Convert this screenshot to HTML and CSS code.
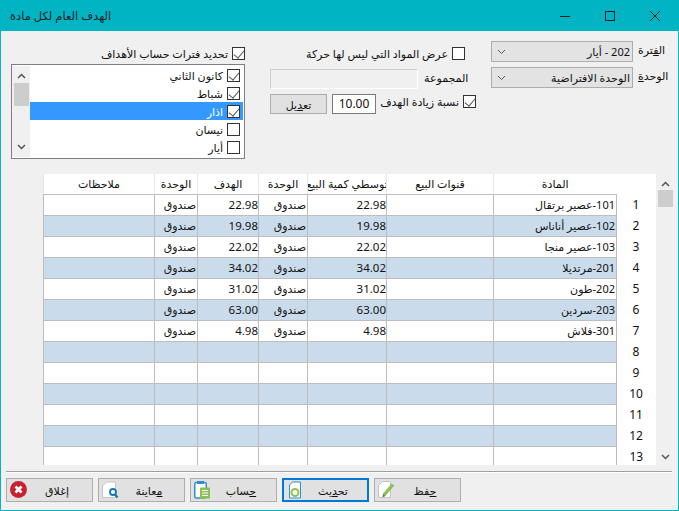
FILE: index.html
```html
<!DOCTYPE html>
<html lang="ar">
<head>
  <meta charset="UTF-8" />
  <title>الهدف العام لكل مادة</title>
  <link rel="stylesheet" href="styles.css">
</head>
<body>
  <div class="window">
    <header class="titlebar">
      <div class="title">الهدف العام لكل مادة</div>
      <div class="win-btns">
        <svg width="12" height="12" viewBox="0 0 12 12"><path d="M1 6.500H11" stroke="#1a1a1a" fill="none"/></svg>
        <svg width="12" height="12" viewBox="0 0 12 12"><rect x="1.500" y="1.500" width="9" height="9" stroke="#1a1a1a" fill="none"/></svg>
        <svg width="12" height="12" viewBox="0 0 12 12"><path d="M1 1L11 11M11 1L1 11" stroke="#1a1a1a" fill="none"/></svg>
      </div>
    </header>

    <section class="filters">
      <div class="months">
        <label class="check check-head">تحديد فترات حساب الأهداف<span class="box on"></span></label>
        <div class="listbox">
          <div class="lb-scroll">
            <svg width="9" height="6" viewBox="0 0 9 6"><path d="M1 5L4.500 1.500L8 5" stroke="#555" stroke-width="1.500" fill="none"/></svg>
            <div class="lb-thumb"></div>
            <svg width="9" height="6" viewBox="0 0 9 6"><path d="M1 1L4.500 4.500L8 1" stroke="#555" stroke-width="1.500" fill="none"/></svg>
          </div>
          <ul class="lb-items">
            <li>كانون الثاني<span class="box on"></span></li>
            <li>شباط<span class="box on"></span></li>
            <li class="selected">اذار<span class="box on"></span></li>
            <li>نيسان<span class="box"></span></li>
            <li>أيار<span class="box"></span></li>
          </ul>
        </div>
      </div>

      <div class="options">
        <label class="check check-moves">عرض المواد التي ليس لها حركة<span class="box"></span></label>
        <div class="row-group">
          <div class="field-flat"></div>
          <span class="lbl">المجموعة</span>
        </div>
        <div class="row-raise">
          <button class="btn-small">تع<u>د</u>يل</button>
          <div class="num-input">10.00</div>
          <label class="check">نسبة زيادة الهدف<span class="box on"></span></label>
        </div>
      </div>

      <div class="combos">
        <div class="combo-row">
          <div class="combo"><svg width="9" height="6" viewBox="0 0 9 6"><path d="M1 1L4.500 4.500L8 1" stroke="#555" fill="none"/></svg><span>202 - أيار</span></div>
          <span class="lbl">ال<u>ف</u>ترة</span>
        </div>
        <div class="combo-row">
          <div class="combo"><svg width="9" height="6" viewBox="0 0 9 6"><path d="M1 1L4.500 4.500L8 1" stroke="#555" fill="none"/></svg><span>الوحدة الافتراضية</span></div>
          <span class="lbl">الوحد<u>ة</u></span>
        </div>
      </div>
    </section>

    <section class="grid-wrap">
      <table class="grid">
        <colgroup>
          <col class="c-notes"><col class="c-unit"><col class="c-goal"><col class="c-unit2"><col class="c-avg"><col class="c-chan"><col class="c-item"><col class="c-num">
        </colgroup>
        <thead>
          <tr>
            <th><span>ملاحظات</span></th><th><span>الوحدة</span></th><th><span>الهدف</span></th><th><span>الوحدة</span></th><th><span class="clipped">متوسطي كمية البيع</span></th><th><span>قنوات البيع</span></th><th><span>المادة</span></th><th class="num"></th>
          </tr>
        </thead>
        <tbody id="rows"></tbody>
      </table>
      <div class="grid-scroll">
        <svg width="9" height="6" viewBox="0 0 9 6"><path d="M1 5L4.500 1.500L8 5" stroke="#555" stroke-width="1.500" fill="none"/></svg>
        <div class="gs-thumb"></div>
        <svg class="gs-down" width="9" height="6" viewBox="0 0 9 6"><path d="M1 1L4.500 4.500L8 1" stroke="#555" stroke-width="1.500" fill="none"/></svg>
      </div>
    </section>

    <hr class="sep">

    <footer class="actions">
      <button class="btn">
        <svg width="18" height="18" viewBox="0 0 18 18"><circle cx="8.500" cy="8.500" r="8.500" fill="#c8202f"/><path d="M5.500 5.500L11.500 11.500M11.500 5.500L5.500 11.500" stroke="#fff" stroke-width="2.800"/></svg>
        <span>إغلاق</span>
      </button>
      <button class="btn">
        <svg width="18" height="18" viewBox="0 0 18 18"><path d="M0.500 5L4.500 1H13.500V16.500H0.500Z" fill="#fff" stroke="#c4c4c4"/><circle cx="11" cy="11" r="3" fill="#fff" stroke="#1577b8" stroke-width="1.800"/><path d="M13 13.500L15.500 16.500" stroke="#1577b8" stroke-width="2.200"/></svg>
        <span><u>م</u>عاينة</span>
      </button>
      <button class="btn">
        <svg width="18" height="18" viewBox="0 0 18 18"><rect x="0.750" y="1.500" width="11.500" height="15.500" rx="1.500" fill="#fff" stroke="#2b8fd0" stroke-width="1.500"/><rect x="3" y="0" width="7" height="3" fill="#2b8fd0"/><rect x="6" y="6.500" width="10" height="11" fill="#8cc152"/><path d="M8 9.500H14M8 12H14M8 14.500H14" stroke="#fff"/></svg>
        <span><u>ح</u>ساب</span>
      </button>
      <button class="btn active">
        <svg width="18" height="18" viewBox="0 0 18 18"><path d="M3.500 4L6.500 1H14.500V17H3.500Z" fill="#fff" stroke="#2b8fd0"/><circle cx="9" cy="11.500" r="3.500" fill="none" stroke="#8cc152" stroke-width="2"/></svg>
        <span>تح<u>د</u>يث</span>
      </button>
      <button class="btn">
        <svg width="18" height="18" viewBox="0 0 18 18"><path d="M0.500 4.500L4.500 0.500H12.500V16.500H0.500Z" fill="#fff" stroke="#c4c4c4"/><path d="M6 14L15 3.500" stroke="#8cc152" stroke-width="3.400"/><path d="M4.500 16.500L5 13L7.500 15Z" fill="#5d7f34"/></svg>
        <span><u>ح</u>فظ</span>
      </button>
    </footer>
  </div>

  <script>
    const items = [
      { name: "101-عصير برتقال", avg: "22.98", goal: "22.98" },
      { name: "102-عصير أناناس", avg: "19.98", goal: "19.98" },
      { name: "103-عصير منجا", avg: "22.02", goal: "22.02" },
      { name: "201-مرتديلا", avg: "34.02", goal: "34.02" },
      { name: "202-طون", avg: "31.02", goal: "31.02" },
      { name: "203-سردين", avg: "63.00", goal: "63.00" },
      { name: "301-فلاش", avg: "4.98", goal: "4.98" }
    ];

    const rows = document.getElementById("rows");
    for (let i = 0; i < 13; i++) {
      const item = items[i];
      const tr = document.createElement("tr");
      tr.innerHTML =
        "<td></td>" +
        "<td>" + (item ? "صندوق" : "") + "</td>" +
        "<td class='n'>" + (item ? item.goal : "") + "</td>" +
        "<td>" + (item ? "صندوق" : "") + "</td>" +
        "<td class='n'>" + (item ? item.avg : "") + "</td>" +
        "<td></td>" +
        "<td>" + (item ? item.name : "") + "</td>" +
        "<td class='num'>" + (i + 1) + "</td>";
      rows.appendChild(tr);
    }
  </script>
</body>
</html>
```

FILE: styles.css
```css
* {
  box-sizing: border-box;
}

html, body {
  margin: 0;
  padding: 0;
}

body {
  width: 679px;
  height: 511px;
  overflow: hidden;
  font-family: "Noto Sans", "DejaVu Sans", sans-serif;
  font-size: 11px;
  color: #111;
}

.window {
  width: 679px;
  height: 511px;
  background: #f0f0f0;
  border: 1px solid #00b4c4;
  display: flex;
  flex-direction: column;
}

.titlebar {
  height: 30px;
  background: #00b4c4;
  display: flex;
  justify-content: space-between;
  align-items: center;
  flex-shrink: 0;
}

.title {
  font-size: 11.500px;
  color: #222;
  padding: 0 0 2px 9px;
  white-space: nowrap;
  direction: rtl;
}

.win-btns {
  display: flex;
  gap: 33px;
  padding-right: 17px;
}

.filters {
  height: 143px;
  display: flex;
  flex-shrink: 0;
}

.box {
  display: inline-block;
  width: 13px;
  height: 13px;
  background: #fff;
  border: 1px solid #333;
  flex-shrink: 0;
  position: relative;
}

.box.on::after {
  content: "";
  position: absolute;
  left: 3px;
  top: 0;
  width: 5px;
  height: 9px;
  border: solid #555;
  border-width: 0 1px 1px 0;
  transform: rotate(40deg);
}

.check {
  display: flex;
  justify-content: flex-end;
  align-items: center;
  gap: 4px;
  white-space: nowrap;
}

.months {
  width: 234px;
  margin-left: 10px;
  padding-top: 16px;
}

.check-head {
  height: 13px;
}

.listbox {
  margin-top: 4px;
  height: 95px;
  border: 1px solid #7a8088;
  background: #fff;
  display: flex;
}

.lb-scroll {
  width: 18px;
  margin: 1px 0;
  background: #f0f0f0;
  display: flex;
  flex-direction: column;
  align-items: center;
  padding-top: 7px;
  flex-shrink: 0;
}

.lb-thumb {
  width: 15px;
  height: 23px;
  background: #cdcdcd;
  margin: 4px 0 38px;
}

.lb-items {
  list-style: none;
  margin: 0;
  padding: 1px 0 0;
  flex: 1;
}

.lb-items li {
  height: 18px;
  display: flex;
  justify-content: flex-end;
  align-items: center;
  gap: 4px;
  padding-right: 3px;
  margin-right: 1px;
}

.lb-items li.selected {
  background: #3399ff;
  color: #fff;
}

.options {
  width: 208px;
  margin-left: 25px;
  padding-top: 16px;
}

.check-moves {
  height: 13px;
  padding-right: 13px;
}

.row-group {
  display: flex;
  align-items: flex-start;
  margin-top: 9px;
  height: 20px;
}

.field-flat {
  width: 148px;
  height: 20px;
  background: #f0f0f0;
  border: 1px solid #cfcfcf;
  border-right-color: #fff;
  border-bottom-color: #fff;
}

.row-group .lbl {
  margin-left: 6px;
  white-space: nowrap;
  padding-top: 1px;
}

.row-raise {
  display: flex;
  align-items: flex-start;
  margin-top: 5px;
  height: 20px;
}

.btn-small {
  width: 57px;
  height: 20px;
  background: #e1e1e1;
  border: 1px solid #adadad;
  font: inherit;
  color: inherit;
  padding: 0;
}

.num-input {
  width: 44px;
  height: 20px;
  margin-left: 5px;
  background: #fff;
  border: 1px solid #7a7a7a;
  line-height: 18px;
  text-align: center;
  font-size: 12px;
}

.row-raise .check {
  flex: 1;
  padding-right: 2px;
}

.combos {
  width: 175px;
  margin-left: 13px;
  padding-top: 10px;
  display: flex;
  flex-direction: column;
  gap: 5px;
}

.combo-row {
  display: flex;
  align-items: flex-start;
  gap: 5px;
}

.combo {
  width: 142px;
  height: 21px;
  background: #e3e3e3;
  border: 1px solid #adadad;
  display: flex;
  justify-content: space-between;
  align-items: center;
  padding: 0 2px 0 5px;
  flex-shrink: 0;
  white-space: nowrap;
}

.combo span {
  direction: rtl;
}

.combo-row .lbl {
  white-space: nowrap;
  padding-top: 1px;
}

.grid-wrap {
  display: flex;
  height: 291px;
  flex-shrink: 0;
  margin-left: 42px;
  align-items: flex-start;
  overflow: hidden;
}

.grid {
  border-collapse: collapse;
  table-layout: fixed;
  width: 612px;
  background: #fff;
  flex-shrink: 0;
}

.c-notes { width: 111px; }
.c-unit { width: 43px; }
.c-goal { width: 61px; }
.c-unit2 { width: 49px; }
.c-avg { width: 79px; }
.c-chan { width: 107px; }
.c-item { width: 123px; }
.c-num { width: 39px; }

.grid th {
  height: 20px;
  padding: 0;
  font-weight: normal;
  border-left: 1px solid #e6e6e6;
  border-bottom: 1px solid #bdbdbd;
  overflow: hidden;
}

.grid th span {
  display: flex;
  justify-content: center;
  white-space: nowrap;
}

.grid th span.clipped {
  margin-right: -6px;
}

.grid td {
  height: 21px;
  padding: 0 1px;
  border: 1px solid #bdbdbd;
  text-align: right;
  direction: rtl;
  white-space: nowrap;
  overflow: hidden;
}

.grid td.n {
  direction: ltr;
  font-size: 11.500px;
  padding-right: 0;
}

.grid tr:nth-child(even) td {
  background: #cadceb;
}

.grid tbody tr:nth-child(n) td.num,
.grid th.num {
  background: #fff;
  border: none;
  text-align: center;
  font-size: 12px;
  direction: ltr;
}

.grid-scroll {
  width: 17px;
  margin-left: 1px;
  height: 291px;
  background: #f0f0f0;
  display: flex;
  flex-direction: column;
  align-items: center;
  padding-top: 7px;
}

.gs-thumb {
  width: 15px;
  height: 17px;
  background: #cdcdcd;
  margin-top: 3px;
}

.gs-down {
  margin-top: auto;
  margin-bottom: 5px;
}

.sep {
  margin: 6px 6px 0 5px;
  height: 2px;
  border: none;
  border-top: 1px solid #a0a0a0;
  border-bottom: 1px solid #fff;
  flex-shrink: 0;
}

.actions {
  display: flex;
  gap: 5px;
  padding: 5px 0 0 5px;
}

.btn {
  width: 87px;
  height: 24px;
  background: #e1e1e1;
  border: 1px solid #adadad;
  font: inherit;
  color: inherit;
  padding: 0 3px;
  display: flex;
  align-items: center;
}

.btn span {
  flex: 1;
  text-align: center;
  padding-right: 3px;
}

.btn.active {
  border: 2px solid #0078d7;
  padding: 0 2px;
}
```
